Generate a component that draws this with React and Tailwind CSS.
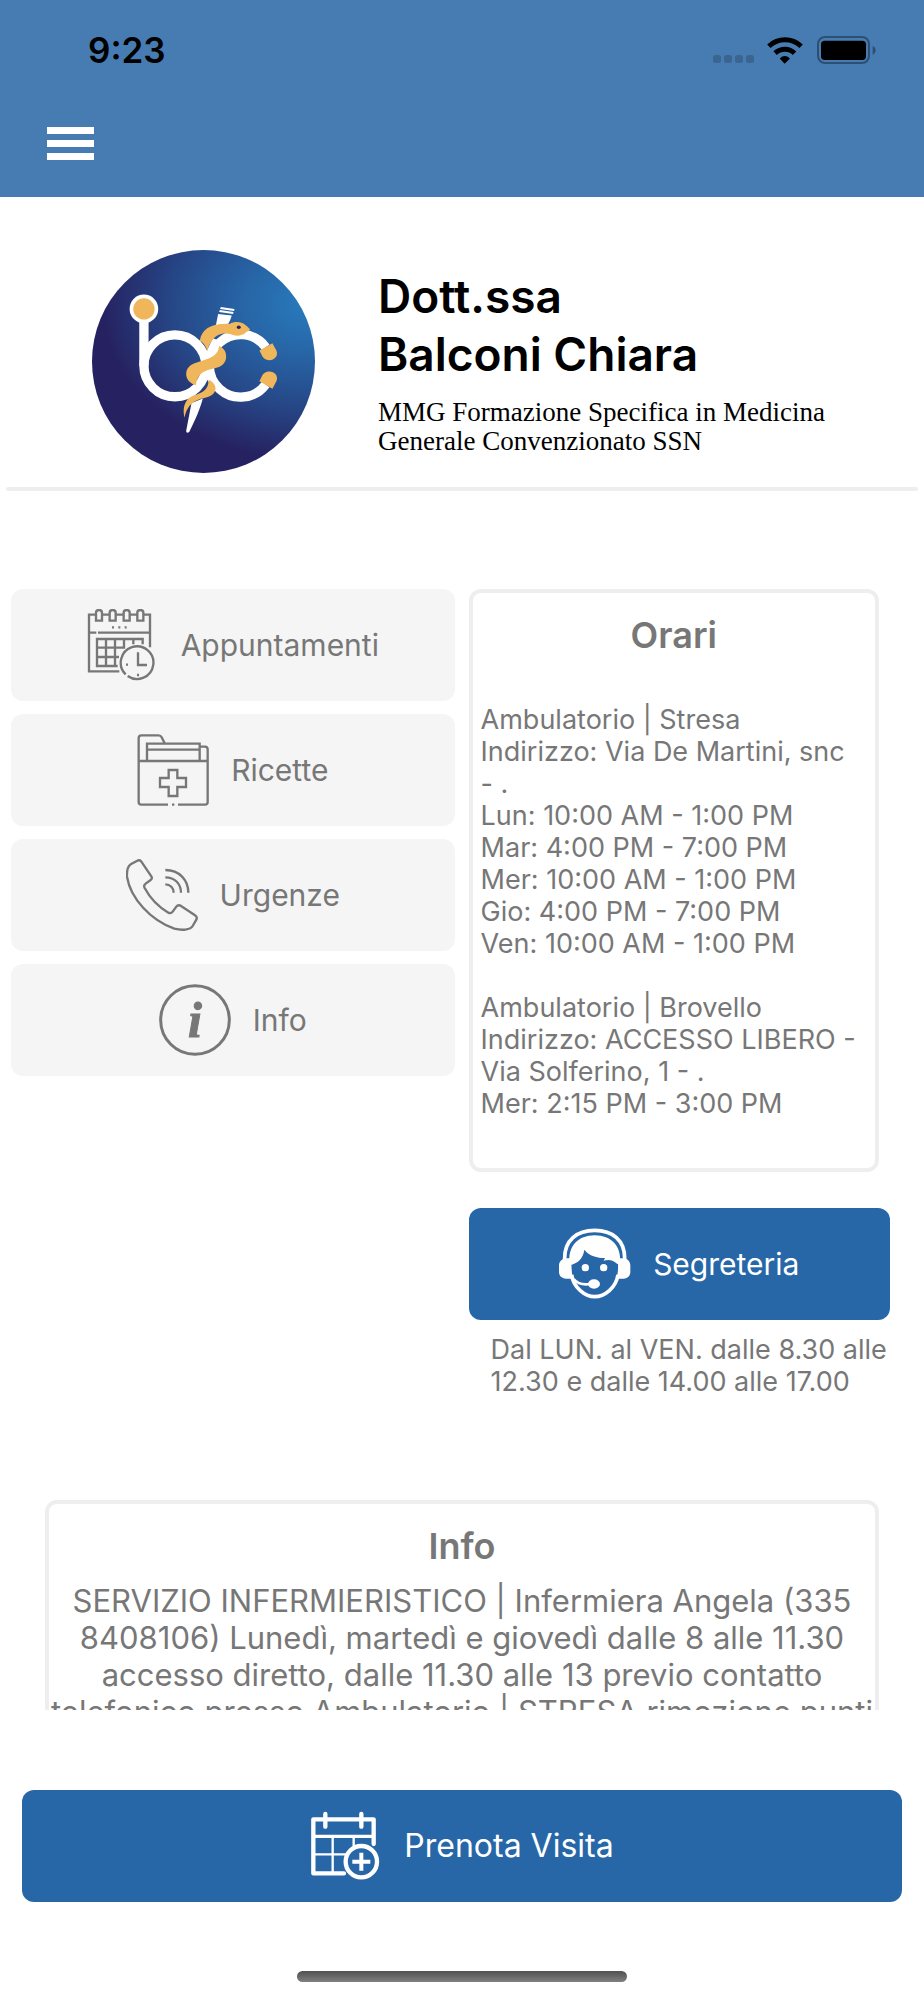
import clsx from 'clsx';

const offices = [
  {
    name: 'Ambulatorio | Stresa',
    address: ['Indirizzo: Via De Martini, snc', '- .'],
    hours: [
      'Lun: 10:00 AM - 1:00 PM',
      'Mar: 4:00 PM - 7:00 PM',
      'Mer: 10:00 AM - 1:00 PM',
      'Gio: 4:00 PM - 7:00 PM',
      'Ven: 10:00 AM - 1:00 PM',
    ],
  },
  {
    name: 'Ambulatorio | Brovello',
    address: ['Indirizzo: ACCESSO LIBERO -', 'Via Solferino, 1 - .'],
    hours: ['Mer: 2:15 PM - 3:00 PM'],
  },
];

const infoLines = [
  'SERVIZIO INFERMIERISTICO | Infermiera Angela (335',
  '8408106) Lunedì, martedì e giovedì dalle 8 alle 11.30',
  'accesso diretto, dalle 11.30 alle 13 previo contatto',
  'telefonico presso Ambulatorio | STRESA rimozione punti',
];

function Icon({ viewBox, strokeWidth = 7, children }) {
  return (
    <svg
      viewBox={viewBox}
      className="size-[72px] shrink-0"
      fill="none"
      stroke="currentColor"
      strokeWidth={strokeWidth}
      aria-hidden="true"
    >
      {children}
    </svg>
  );
}

function AppointmentsIcon() {
  return (
    <Icon viewBox="258 87 216 216">
      <path d="M284 104H264V274H355M447 202V104H428M304 104h21M345 104h21M387 104h21" />
      {[294, 335, 377, 418].map((x) => (
        <path key={x} d={`M${x - 9} 122V98q0-8 9-8t9 8v24Z`} />
      ))}
      <path d="M264 158h22M291 158h156" />
      <path d="M333 142h6M352 142h6M371 142h6" />
      <path d="M350 258H288V177H425V193M315 177v81M342 177v81M369 177v26H288M397 177v16M288 231h66" />
      <path d="M380 288A49 49 0 1 0 374 283" />
      <path d="M411 217v38h27M375 254h6M408 285h6" />
    </Icon>
  );
}

function RecipesIcon() {
  return (
    <Icon viewBox="403 462 216 216">
      <path d="M496 674H416q-8 0-8-8V474q0-8 8-8H468q6 0 9 6L486 490" />
      <path d="M592 500H607q8 0 8 8V666q0 8-8 8H526M408 543H615" />
      <path d="M433 543V491H591V543M433 509H591M508 674h7" />
      <path d="M498 570H524V594H550V621H524V648H498V621H472V594H498Z" />
    </Icon>
  );
}

function PhoneIcon() {
  return (
    <Icon viewBox="375 87 216 216">
      <path d="M389 103L409 92Q416 88 421 95L451 139Q455 146 449 150L434 161Q427 166 431 174C447 204 475 232 502 248Q510 252 515 245L526 230Q531 223 539 227L582 256Q590 261 586 269L575 288C568 300 543 302 520 296C450 272 388 205 378 140C377 120 379 110 389 103Z" />
      <path d="M493 120C535 120 562 150 562 188M493 142C522 142 540 162 540 188M493 163C508 163 518 174 518 188" />
    </Icon>
  );
}

function InfoIcon() {
  return (
    <Icon viewBox="475 462 216 216" strokeWidth={9}>
      <circle cx="583" cy="570" r="103" />
      <text
        x="583"
        y="622"
        textAnchor="middle"
        fill="currentColor"
        stroke="currentColor"
        strokeWidth="3"
        className="font-['Liberation_Serif',serif] text-[150px] font-bold italic"
      >
        i
      </text>
    </Icon>
  );
}

function OperatorIcon() {
  return (
    <Icon viewBox="294 115 216 216" strokeWidth={11}>
      <path d="M311 212V205C311 152 347 122 401 122C455 122 491 152 491 205V212" />
      <path fill="currentColor" stroke="none" d="M318 206H331C331 226 331 246 336 267H316C300 267 294 256 294 247V228C294 216 303 206 318 206ZM485 206H470C472 226 472 246 467 267H487C502 267 508 256 508 247V228C508 216 500 206 485 206Z" />
      <path fill="currentColor" stroke="none" d="M326 225C318 170 352 137 401 137C450 137 485 170 476 225L468 222C458 212 444 208 428 213L432 205C408 205 385 199 370 180C367 206 350 222 326 226Z" />
      <path d="M332 255C337 294 373 321 401 321C431 321 465 294 471 255" />
      <g fill="currentColor" stroke="none">
        <circle cx="373" cy="234" r="11" />
        <circle cx="428" cy="234" r="11" />
        <ellipse cx="399" cy="283" rx="18" ry="14" />
      </g>
      <path strokeWidth="8" d="M338 268C350 283 368 286 388 283" />
    </Icon>
  );
}

function BookIcon() {
  return (
    <Icon viewBox="63 51 216 216" strokeWidth={13}>
      <path strokeLinecap="round" strokeLinejoin="round" d="M165 241H73V79H254V153M109 63V101M217 63V101" />
      <path strokeWidth="10" d="M73 130H254" />
      <path strokeWidth="7" d="M131 130V241M194 130V160M73 184H172" />
      <circle cx="217" cy="206" r="47" />
      <path strokeWidth="12" d="M190 206H244M217 179V233" />
    </Icon>
  );
}

function Logo() {
  return (
    <svg viewBox="35 30 670 670" className="size-[223px] shrink-0" role="img" aria-label="BC">
      <defs>
        <radialGradient
          id="sky"
          gradientUnits="userSpaceOnUse"
          cx="0"
          cy="0"
          r="1"
          gradientTransform="translate(690 190) scale(680 510)"
        >
          <stop offset="0" stopColor="#287bbd" />
          <stop offset="0.3" stopColor="#2765a6" />
          <stop offset="0.6" stopColor="#264888" />
          <stop offset="0.92" stopColor="#262261" />
        </radialGradient>
      </defs>
      <circle cx="370" cy="365" r="335" fill="url(#sky)" />
      <g fill="none" stroke="#fff" strokeWidth="28">
        <path d="M191 240V378" />
        <circle cx="284" cy="378" r="93" />
        <path d="M557 322A94 94 0 1 0 557 434" />
      </g>
      <circle cx="191" cy="207" r="43" fill="#fff" />
      <circle cx="191" cy="207" r="32" fill="#f0b65b" />
      <g fill="#fff">
        <path d="M422 201L463 207L462 213L420 207ZM419 210L460 216L459 222L417 216ZM414 222L455 227Q452 240 442 256L406 262Z" />
        <path d="M398 295L425 305L400 372L372 432L345 452L362 400L376 340Z" />
        <path d="M334 490L368 476C356 520 336 558 327 577Q318 583 318 573Z" />
      </g>
      <g fill="#f0b65b">
        <path d="M381 335C378 318 368 307 359 303C364 268 392 250 448 252C462 244 484 244 494 254Q505 262 510 269Q508 275 498 276C490 288 466 290 455 284C430 276 408 284 396 302C386 314 384 324 381 335Z" />
        <path d="M417 318C432 327 439 336 438 353C436 376 416 384 392 388C366 393 350 408 347 436C330 432 317 418 318 401C319 378 340 370 366 363C398 354 415 343 417 318Z" />
        <path d="M385 420C398 425 407 436 406 448C404 466 384 472 362 477C334 485 318 505 313 534C306 506 313 481 334 470C358 461 386 456 385 420Z" />
        <path d="M538 332L577 310L589 332C596 348 583 361 568 361C556 361 549 354 546 348Z" />
        <path d="M538 424L577 447L589 424C596 408 583 395 568 395C556 395 549 402 546 408Z" />
      </g>
      <ellipse cx="476" cy="262" rx="6" ry="5" fill="#262261" />
    </svg>
  );
}

function StatusBar() {
  return (
    <div className="flex h-[100px] items-center justify-between pr-[48px] pl-[88px]">
      <time className="text-[35px] leading-[44px] font-semibold text-black">9:23</time>
      <div className="flex items-center">
        <svg viewBox="0 0 42 28" className="mr-[12px] h-[28px] w-[42px]" fill="#3a6591" aria-hidden="true">
          {[0, 11, 22, 33].map((x) => (
            <rect key={x} x={x} y="19" width="8" height="8" rx="2.5" />
          ))}
        </svg>
        <svg viewBox="502 109 108 82" className="mr-[14px] h-[27px] w-[36px]" aria-hidden="true">
          <g fill="none" stroke="#000" strokeWidth="15">
            <path d="M507 137C535 111 577 111 605 137" />
            <path d="M526 158C543 142 569 142 585 158" />
          </g>
          <path d="M540 174Q555 160 571 174L555 190Z" />
        </svg>
        <svg viewBox="651 108 177 84" className="h-[28px] w-[59px]" aria-hidden="true">
          <rect x="654" y="111" width="153" height="78" rx="21" fill="none" stroke="#2c4f73" strokeWidth="6" />
          <rect x="663" y="122" width="135" height="58" rx="11" />
          <path d="M818 137Q827 142 827 151T818 165Z" fill="#2c4f73" />
        </svg>
      </div>
    </div>
  );
}

function ActionButton({ icon, className, children }) {
  return (
    <button
      className={clsx('flex h-[112px] w-full items-center justify-center gap-[22px] rounded-xl', className)}
    >
      {icon}
      {children}
    </button>
  );
}

function MenuButton({ icon, children }) {
  return (
    <ActionButton icon={icon} className="bg-[#f5f5f5] text-[30px] text-[#777]">
      {children}
    </ActionButton>
  );
}

function Card({ title, className, children }) {
  return (
    <section className={clsx('rounded-xl border-4 border-[#eee]', className)}>
      <h2 className="text-center text-[36px] leading-[44px] font-semibold">{title}</h2>
      {children}
    </section>
  );
}

export default function App() {
  return (
    <div className="flex h-screen flex-col bg-white font-['Inter',sans-serif] text-[#777]">
      <header className="h-[197px] shrink-0 bg-[#477cb2]">
        <StatusBar />
        <button className="ml-[47px] flex h-[86px] w-[47px] flex-col justify-center gap-[6px]" aria-label="Menu">
          <span className="h-[7px] w-full bg-white" />
          <span className="h-[7px] w-full bg-white" />
          <span className="h-[7px] w-full bg-white" />
        </button>
      </header>

      <div className="shrink-0 px-[6px] pt-[53px]">
        <div className="flex items-center gap-[63px] pb-[14px] pl-[86px] text-black">
          <Logo />
          <div>
            <h1 className="text-[46px] leading-[58px] font-semibold">
              Dott.ssa
              <br />
              Balconi Chiara
            </h1>
            <p className="mt-[15px] font-['Liberation_Serif',serif] text-[27px] leading-[29px]">
              MMG Formazione Specifica in Medicina
              <br />
              Generale Convenzionato SSN
            </p>
          </div>
        </div>
        <hr className="h-[4px] rounded-full border-0 bg-[#eee]" />
      </div>

      <main className="min-h-0 flex-1 overflow-y-auto pt-[98px] [scrollbar-width:none]">
        <div className="grid grid-cols-[20fr_19fr] gap-x-[14px] pr-[34px] pl-[11px]">
          <nav className="flex flex-col gap-[13px]">
            <MenuButton icon={<AppointmentsIcon />}>Appuntamenti</MenuButton>
            <MenuButton icon={<RecipesIcon />}>Ricette</MenuButton>
            <MenuButton icon={<PhoneIcon />}>Urgenze</MenuButton>
            <MenuButton icon={<InfoIcon />}>Info</MenuButton>
          </nav>

          <div>
            <Card title="Orari" className="mr-[11px] px-[8px] pt-[20px] pb-[48px]">
              <div className="mt-[47px] flex flex-col gap-[32px] text-[27px] leading-[32px] whitespace-nowrap">
                {offices.map((office) => (
                  <div key={office.name}>
                    {[office.name, ...office.address, ...office.hours].map((line) => (
                      <p key={line}>{line}</p>
                    ))}
                  </div>
                ))}
              </div>
            </Card>
            <div className="mt-[36px]">
              <ActionButton icon={<OperatorIcon />} className="bg-[#2767a8] text-[30px] text-white">
                Segreteria
              </ActionButton>
            </div>
            <p className="mt-[14px] pl-[22px] text-[27px] leading-[32px] whitespace-nowrap">
              Dal LUN. al VEN. dalle 8.30 alle
              <br />
              12.30 e dalle 14.00 alle 17.00
            </p>
          </div>
        </div>

        <Card title="Info" className="mx-[45px] mt-[102px] pt-[20px] pb-[20px]">
          <div className="mt-[14px] text-center text-[31px] leading-[37px] whitespace-nowrap">
            {infoLines.map((line) => (
              <p key={line}>{line}</p>
            ))}
          </div>
        </Card>
      </main>

      <footer className="shrink-0 px-[22px] pt-[80px] pb-[18px]">
        <ActionButton icon={<BookIcon />} className="bg-[#2767a8] text-[32px] text-white">
          Prenota Visita
        </ActionButton>
        <div className="mx-auto mt-[69px] h-[11px] w-[330px] rounded-full bg-linear-to-b from-[#505050] to-[#808080]" />
      </footer>
    </div>
  );
}
